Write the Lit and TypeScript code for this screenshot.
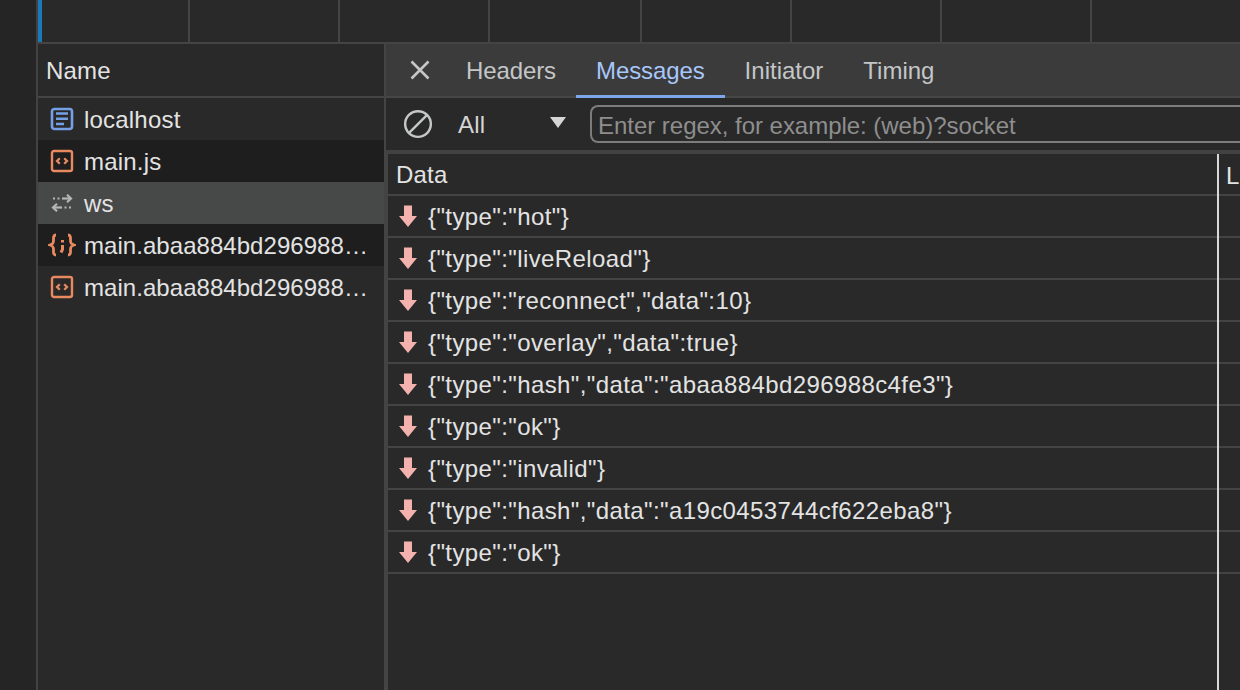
import { LitElement, html, css, svg } from "lit";
import { customElement } from "lit/decorators.js";

const codeIcon = svg`<svg class="ic" viewBox="0 0 26 26" width="26" height="26"><rect x="3" y="3" width="20" height="20" rx="2" fill="none" stroke="#e8895f" stroke-width="2.400"/><path d="M10.800 10.200 8 13l2.800 2.800M15.200 10.200 18 13l-2.800 2.800" fill="none" stroke="#e8895f" stroke-width="2.300"/></svg>`;
const docIcon = svg`<svg class="ic" viewBox="0 0 26 26" width="26" height="26"><rect x="3" y="3" width="20" height="20" rx="2.500" fill="none" stroke="#75a0e6" stroke-width="2.600"/><path d="M7 7.500h12M7 12.800h12M7 18h8" fill="none" stroke="#75a0e6" stroke-width="2.400"/></svg>`;
const wsIcon = svg`<svg class="ic" viewBox="0 0 26 26" width="26" height="26"><path d="M18 4.800 22 8.500 18 12.200" fill="none" stroke="#b4b6b7" stroke-width="2.200"/><path d="M13 8.500h8.500" stroke="#b4b6b7" stroke-width="2.200"/><path d="M4 8.500h2M8.500 8.500h2" stroke="#b4b6b7" stroke-width="1.800"/><path d="M8 13.800 4 17.500 8 21.200" fill="none" stroke="#b4b6b7" stroke-width="2.200"/><path d="M4.500 17.500H13" stroke="#b4b6b7" stroke-width="2.200"/><path d="M15.500 17.500h2M20 17.500h2" stroke="#b4b6b7" stroke-width="1.800"/></svg>`;
const jsonIcon = svg`<svg class="ic" viewBox="0 0 28 26" width="28" height="26"><path d="M8 3C5 3 5.500 6 5.500 8.500 5.500 11 5 12 2 13 5 14 5.500 15 5.500 17.500 5.500 20 5 23 8 23M20 3C23 3 22.500 6 22.500 8.500 22.500 11 23 12 26 13 23 14 22.500 15 22.500 17.500 22.500 20 23 23 20 23" fill="none" stroke="#e8895f" stroke-width="2.800"/><path d="M14.500 8v2.500M14.500 13v4.500L13 20.500" fill="none" stroke="#e8895f" stroke-width="3"/></svg>`;
const arrow = svg`<svg class="arrow" viewBox="0 0 20 24" width="20" height="24"><path d="M6 1.500h8v10.500h5l-9 11L1 12h5z" fill="#f4b2ae"/></svg>`;

const files: [string, unknown, string][] = [
  ["localhost", docIcon, ""],
  ["main.js", codeIcon, "dark"],
  ["ws", wsIcon, "sel"],
  ["main.abaa884bd296988…", jsonIcon, "dark trunc"],
  ["main.abaa884bd296988…", codeIcon, "trunc"],
];

const messages = [
  '{"type":"hot"}',
  '{"type":"liveReload"}',
  '{"type":"reconnect","data":10}',
  '{"type":"overlay","data":true}',
  '{"type":"hash","data":"abaa884bd296988c4fe3"}',
  '{"type":"ok"}',
  '{"type":"invalid"}',
  '{"type":"hash","data":"a19c0453744cf622eba8"}',
  '{"type":"ok"}',
];

@customElement("app-root")
export class AppRoot extends LitElement {
  static styles = css`
    :host {
      display: flex;
      width: 1240px;
      height: 690px;
      overflow: hidden;
      background: #252525;
      color: #e3e3e3;
      font-family: "Liberation Sans", Arial, sans-serif;
      font-size: 24px;
      letter-spacing: 0.2px;
    }
    .gutter { width: 36px; flex: none; background: #252525; }
    .main { flex: 1; min-width: 0; display: flex; flex-direction: column; border-left: 2px solid #424242; }
    .timeline { height: 44px; box-sizing: border-box; flex: none; display: flex; background: #292929; border-bottom: 2px solid #444444; }
    .lead { width: 4px; background: #1a7ab8; flex: none; }
    .tick { width: 150px; flex: none; border-right: 2px solid #444444; box-sizing: border-box; }
    .tick.first { width: 148px; }
    .tick.wide { width: 152px; }
    .split { flex: 1; display: flex; min-height: 0; }
    .list { width: 348px; flex: none; box-sizing: border-box; display: flex; flex-direction: column; background: #292929; border-right: 2px solid #444444; }
    .name-head { height: 54px; box-sizing: border-box; flex: none; display: flex; align-items: center; padding: 2px 0 0 8px; border-bottom: 2px solid #444444; }
    .file { height: 42px; flex: none; display: flex; align-items: center; gap: 9px; padding: 2px 0 0 11px; box-sizing: border-box; }
    .file.dark { background: #1e1e1e; }
    .file.sel { background: #474848; }
    .file.trunc { letter-spacing: 0.05px; }
    .file-icon { width: 26px; height: 26px; margin-top: -2px; flex: none; display: flex; justify-content: center; }
    .ic { display: block; flex: none; }
    .fname { white-space: nowrap; }
    .detail { flex: 1; min-width: 0; display: flex; flex-direction: column; background: #292929; }
    .tabs { height: 54px; box-sizing: border-box; flex: none; display: flex; background: #3b3b3b; border-bottom: 2px solid #474747; }
    .close { width: 70px; flex: none; display: flex; align-items: center; justify-content: center; }
    .close svg { margin-left: -2px; }
    .tab { padding: 0 20px; margin-bottom: -2px; display: flex; align-items: center; color: #c4c6c8; letter-spacing: 0; }
    .tab.tight { letter-spacing: -0.1px; }
    .tab.on { color: #a8c7fa; box-shadow: inset 0 -3px 0 #7ca5ea; }
    .tab.first { margin-left: -10px; }
    .toolbar { height: 56px; flex: none; box-sizing: border-box; display: flex; align-items: center; background: #292929; border-bottom: 4px solid #424242; }
    .block { margin-left: 17px; flex: none; display: block; }
    .filter { width: 132px; margin-left: 25px; flex: none; box-sizing: border-box; display: flex; align-items: center; justify-content: space-between; padding: 2px 24px 0 0; color: #d5d5d5; }
    .tri { width: 0; height: 0; border-left: 8px solid transparent; border-right: 8px solid transparent; border-top: 11px solid #d5d5d5; margin-top: -6px; }
    .search { flex: 1; height: 38px; box-sizing: border-box; display: flex; align-items: center; padding: 3px 0 0 6px; border: 2px solid #7c7c7c; border-right: none; border-radius: 8px 0 0 8px; color: #8e8e8e; white-space: nowrap; overflow: hidden; letter-spacing: -0.03px; }
    .table { flex: 1; display: flex; flex-direction: column; position: relative; min-height: 0; border-left: 2px solid #444444; }
    .table-row { height: 42px; flex: none; box-sizing: border-box; display: flex; align-items: center; border-bottom: 2px solid #444444; padding: 2px 0 0 10px; white-space: nowrap; letter-spacing: 0.4px; }
    .table-head { padding-left: 8px; letter-spacing: 0.2px; }
    .arrow { display: block; flex: none; margin-right: 10px; margin-top: -2px; }
    .cols { position: absolute; left: 829px; top: 0; bottom: 0; width: 2px; background: #d8d8d8; }
    .last-head { position: absolute; left: 838px; top: 0; height: 42px; padding-top: 2px; box-sizing: border-box; display: flex; align-items: center; }
  `;

  render() {
    return html`
      <div class="gutter"></div>
      <div class="main">
        <div class="timeline">
          <div class="lead"></div>
          <div class="tick first"></div>
          <div class="tick"></div>
          <div class="tick"></div>
          <div class="tick wide"></div>
          <div class="tick"></div>
          <div class="tick"></div>
          <div class="tick"></div>
          <div class="tick"></div>
        </div>
        <div class="split">
          <div class="list">
            <div class="name-head">Name</div>
            ${files.map(
              ([n, icon, cls]) => html`<div class="file ${cls}">
                <span class="file-icon">${icon}</span><span class="fname">${n}</span>
              </div>`
            )}
          </div>
          <div class="detail">
            <div class="tabs">
              <div class="close">
                <svg viewBox="0 0 24 24" width="24" height="24"><path d="M3.500 3.500l17 17M20.500 3.500l-17 17" stroke="#c4c6c8" stroke-width="2.600" fill="none"/></svg>
              </div>
              <div class="tab first tight">Headers</div>
              <div class="tab on tight">Messages</div>
              <div class="tab">Initiator</div>
              <div class="tab">Timing</div>
            </div>
            <div class="toolbar">
              <svg class="block" viewBox="0 0 32 32" width="30" height="30"><circle cx="16" cy="16" r="13.700" fill="none" stroke="#c4c6c8" stroke-width="2.600"/><path d="M6.500 25.500l19-19" stroke="#c4c6c8" stroke-width="2.600"/></svg>
              <div class="filter"><span>All</span><span class="tri"></span></div>
              <div class="search">Enter regex, for example: (web)?socket</div>
            </div>
            <div class="table">
              <div class="table-row table-head">Data</div>
              ${messages.map((m) => html`<div class="table-row">${arrow}<span>${m}</span></div>`)}
              <div class="cols"></div>
              <div class="last-head">L</div>
            </div>
          </div>
        </div>
      </div>
    `;
  }
}
